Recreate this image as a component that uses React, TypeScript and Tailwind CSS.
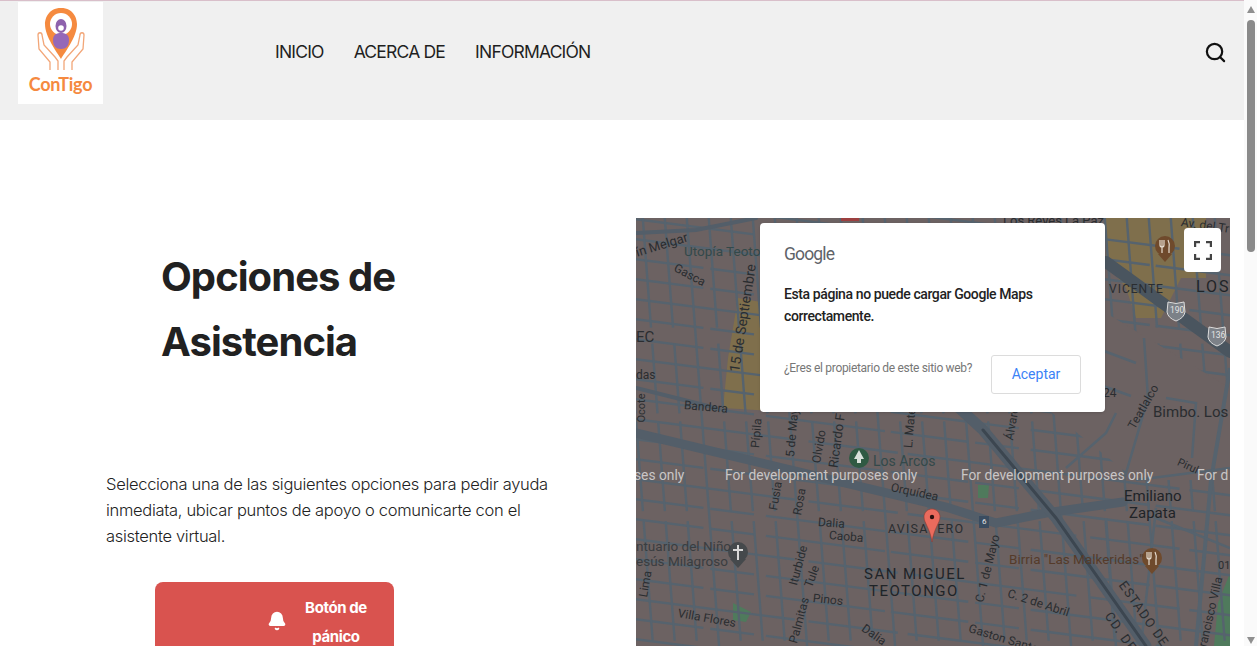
import React from 'react';
import { Search, Bell } from 'lucide-react';

type MapLabel = { t: string; x: number; y: number; r?: number; s?: number; c?: string; ls?: number };

// x, y is where the text starts, measured from the map's top-left corner
const labels: MapLabel[] = [
  { t: 'ín Melgar', x: 0, y: 34, r: -17, s: 13 },
  { t: 'Utopía Teotongo', x: 48, y: 34, s: 13.5, c: '#33494a' },
  { t: 'Gasca', x: 39, y: 49, r: 28, s: 12 },
  { t: '15 de Septiembre', x: 98, y: 154, r: -81, s: 14 },
  { t: 'EC', x: 0, y: 119, s: 15 },
  { t: 'das', x: 0, y: 157, s: 12 },
  { t: 'Ocote', x: 5, y: 204, r: -90, s: 11 },
  { t: 'Bandera', x: 48, y: 187, r: 5, s: 12 },
  { t: 'Pípila', x: 119, y: 230, r: -85, s: 12 },
  { t: '5 de Mayo', x: 154, y: 239, r: -85, s: 12 },
  { t: 'Olvido', x: 180, y: 245, r: -80, s: 12 },
  { t: 'Ricardo F', x: 197, y: 249, r: -82, s: 13 },
  { t: 'L. Mate', x: 272, y: 230, r: -85, s: 12 },
  { t: 'Los Reyes La Paz', x: 367, y: 2, s: 13 },
  { t: 'Av. del Tr', x: 545, y: 4, r: 8, s: 12 },
  { t: 'VICENTE', x: 473, y: 71, s: 12, ls: 1 },
  { t: 'LOS', x: 560, y: 69, s: 16, ls: 2, c: '#1f2428' },
  { t: 'Bimbo. Los R', x: 517, y: 194, s: 15 },
  { t: 'Teatlalco', x: 495, y: 210, r: -60, s: 12 },
  { t: 'Álvaro', x: 373, y: 222, r: -80, s: 12 },
  { t: '24', x: 467, y: 175, s: 12 },
  { t: 'Los Arcos', x: 237, y: 243, s: 14, c: '#33494a' },
  { t: 'Orquídea', x: 255, y: 269, r: 12, s: 12 },
  { t: 'Fusia', x: 137, y: 292, r: -80, s: 12 },
  { t: 'Rosa', x: 161, y: 297, r: -80, s: 12 },
  { t: 'Dalia', x: 182, y: 304, r: 4, s: 12 },
  { t: 'Caoba', x: 193, y: 317, r: 5, s: 12 },
  { t: 'AVISAVERO', x: 252, y: 311, s: 12.5, ls: 1.2 },
  { t: 'SAN MIGUEL', x: 228, y: 356, s: 15, ls: 1.5, c: '#1f2428' },
  { t: 'TEOTONGO', x: 233, y: 373, s: 15, ls: 1.5, c: '#1f2428' },
  { t: 'ntuario del Niño', x: 0, y: 329, s: 13.5, c: '#3a3d40' },
  { t: 'esús Milagroso', x: 0, y: 344, s: 13.5, c: '#3a3d40' },
  { t: 'Lima', x: 7, y: 379, r: -80, s: 12 },
  { t: 'Iturbide', x: 157, y: 367, r: -75, s: 12 },
  { t: 'Tule', x: 172, y: 369, r: -70, s: 12 },
  { t: 'Pinos', x: 177, y: 380, r: 6, s: 12 },
  { t: 'Villa Flores', x: 42, y: 395, r: 10, s: 12 },
  { t: 'Palmitas', x: 157, y: 425, r: -75, s: 12 },
  { t: 'Dalia', x: 227, y: 409, r: 35, s: 12 },
  { t: 'C. 1 de Mayo', x: 343, y: 384, r: -76, s: 12 },
  { t: 'C. 2 de Abril', x: 372, y: 375, r: 18, s: 12 },
  { t: 'Gaston Santos', x: 333, y: 410, r: 17, s: 12 },
  { t: 'Birria "Las Malkeridas"', x: 373, y: 342, s: 13.5, c: '#553b2a' },
  { t: 'Emiliano', x: 488, y: 278, s: 15, c: '#1f2428' },
  { t: 'Zapata', x: 493, y: 295, s: 15, c: '#1f2428' },
  { t: 'Pirul', x: 542, y: 243, r: 25, s: 11 },
  { t: 'ESTADO DE', x: 486, y: 364, r: 55, s: 13, ls: 1 },
  { t: 'CD. DE', x: 472, y: 395, r: 55, s: 13, ls: 1 },
  { t: 'Francisco Villa', x: 565, y: 435, r: -77, s: 12 },
  { t: '01', x: 582, y: 347, s: 11 },
  { t: '190', x: 534, y: 92, s: 8.5, c: '#e4e4e4' },
  { t: '136', x: 575, y: 117, s: 8.5, c: '#e4e4e4' },
  { t: '6', x: 346, y: 304, s: 8, c: '#e4e4e4' },
];

const watermarks = [
  { t: 'ses only', x: -2 },
  { t: 'For development purposes only', x: 89 },
  { t: 'For development purposes only', x: 325 },
  { t: 'For d', x: 561 },
];

// thin neighbourhood streets, worked out from a slightly tilted grid
const across = Array.from({ length: 30 }, (_, i) => -40 + i * 20);
const down = Array.from({ length: 32 }, (_, i) => -60 + i * 22);

function MapStreets() {
  return (
    <svg className="absolute inset-0" width="594" height="428" viewBox="0 0 594 428">
      <rect width="594" height="428" fill="#6c6262" />
      {/* colonias */}
      <polygon points="102,80 125,84 128,140 134,193 87,190 92,140" fill="#7f6f4c" />
      <polygon points="470,0 570,0 570,60 545,60 525,100 500,100 490,70 470,45" fill="#7f6f4c" />
      <polygon points="97,385 115,394 110,404 97,402" fill="#4f7a5c" />
      <polygon points="342,267 353,267 352,280 342,280" fill="#4f7a5c" />
      <polygon points="594,355 594,428 578,428 582,385" fill="#4f7a5c" />
      <g stroke="#56636e" strokeWidth="2.4" fill="none">
        {across.map((y, i) => (
          <line key={i} x1="-10" y1={y} x2="600" y2={y + 78} strokeDasharray={i % 3 === 0 ? '170 14 90 10' : '78 7 44 12 120 6'} />
        ))}
        {down.map((x, i) => (
          <line key={i} x1={x} y1="-10" x2={x + 34} y2="440" strokeDasharray={i % 4 === 1 ? undefined : '120 16 70 8 90 10'} />
        ))}
      </g>
      {/* the emptier part north east of the freeway */}
      <polygon points="470,95 594,170 594,262 500,262 410,190" fill="#6c6262" />
      <g stroke="#56636e" strokeWidth="2.5" fill="none">
        <path d="M508 120 L512 180 L488 262" />
        <path d="M460 130 L500 145 M445 160 L495 178 M530 180 L560 185 L556 240 M430 250 L470 215 L480 195" />
        <path d="M594 150 L575 262 L560 428" strokeWidth="4" />
        <path d="M500 262 L594 250 M520 300 L594 330 M470 300 L480 428 M520 290 L505 428" />
      </g>
      {/* main roads */}
      <g stroke="#535e69" fill="none" strokeLinecap="round">
        <path d="M0 215 L310 289 L360 305 L410 295 L487 284" strokeWidth="9" />
        <path d="M280 150 L347 212 L420 300 L510 428" strokeWidth="11" />
        <path d="M470 44 L594 134" strokeWidth="12" stroke="#4a555f" />
        <path d="M347 212 L420 300 L510 428" strokeWidth="3" stroke="#3c4650" />
        <path d="M120 0 L60 12 L0 15" strokeWidth="4" />
        <path d="M0 170 L80 190" strokeWidth="4" />
      </g>
      {/* shields */}
      <rect x="343" y="298" width="10" height="12" fill="#3a4c60" />
      <path d="M532 84 q8 3 16 0 l1 10 q-1 6 -9 9 q-8 -3 -9 -9 z" fill="#7c8188" stroke="#ddd" />
      <path d="M573 109 q8 3 16 0 l1 10 q-1 6 -9 9 q-8 -3 -9 -9 z" fill="#7c8188" stroke="#ddd" />
      {/* church */}
      <circle cx="102" cy="334" r="10" fill="#45494c" />
      <path d="M94 341 L102 350 L110 341 Z" fill="#45494c" />
      <path d="M102 327 V342 M97 332 H107" stroke="#d8d8d8" strokeWidth="2" />
      {/* park pin */}
      <circle cx="223" cy="240" r="10" fill="#2f5a43" />
      <path d="M223 232 l5 9 h-3 v4 h-4 v-4 h-3 z" fill="#d8e0da" />
      {/* restaurants */}
      <circle cx="529" cy="28" r="10" fill="#6f4a2c" />
      <path d="M522 36 L529 44 L536 36 Z" fill="#6f4a2c" />
      <path d="M524 22 V27 Q524 29 526 29 Q528 29 528 27 V22 M526 22 V35 M532 22 Q534 26 533 30 V35" stroke="#e6dccf" strokeWidth="1.2" fill="none" />
      <circle cx="516" cy="340" r="10" fill="#6f4a2c" />
      <path d="M509 348 L516 356 L523 348 Z" fill="#6f4a2c" />
      <path d="M511 334 V339 Q511 341 513 341 Q515 341 515 339 V334 M513 334 V347 M519 334 Q521 338 520 342 V347" stroke="#e6dccf" strokeWidth="1.2" fill="none" />
      <rect x="205" y="0" width="18" height="3" fill="#9c4040" />
    </svg>
  );
}

function MapPanel() {
  return (
    <div className="relative h-[428px] w-[594px] overflow-hidden font-['Roboto',sans-serif]">
      <MapStreets />
      {labels.map((l, i) => (
        <span
          key={i}
          className="absolute origin-left whitespace-nowrap leading-none"
          style={{
            left: l.x,
            top: l.y - (l.s ?? 12) / 2,
            fontSize: l.s ?? 12,
            color: l.c ?? '#2a2d30',
            letterSpacing: l.ls ?? 0,
            transform: l.r ? `rotate(${l.r}deg)` : undefined,
          }}
        >
          {l.t}
        </span>
      ))}
      {watermarks.map((w) => (
        <span
          key={w.x}
          className="absolute top-[251px] whitespace-nowrap text-[13.8px] leading-none text-[#c9c6c6]"
          style={{ left: w.x }}
        >
          {w.t}
        </span>
      ))}

      <svg className="absolute left-[287px] top-[290px]" width="18" height="36" viewBox="0 0 18 36">
        <path d="M9 1 C4 1 1 5 1 9 C1 15 7 20 9 34 C11 20 17 15 17 9 C17 5 14 1 9 1 Z" fill="#ea6b5d" stroke="#8f3b32" strokeWidth="0.6" />
        <circle cx="9" cy="9" r="2.2" fill="#2a1210" />
      </svg>

      <button className="absolute right-[9px] top-[10px] flex h-[44px] w-[37px] items-center justify-center rounded-sm bg-white">
        <svg width="18" height="19" viewBox="0 0 18 19" fill="none" stroke="#444" strokeWidth="2.4">
          <path d="M1 6 V1 H6 M12 1 H17 V6 M17 13 V18 H12 M6 18 H1 V13" />
        </svg>
      </button>

      {/* error dialog */}
      <div className="absolute left-[124px] top-[5px] flex h-[189px] w-[345px] flex-col rounded bg-white px-6 pt-[21px] shadow-sm">
        <div className="text-[17.5px] leading-[20px] tracking-[-0.85px] text-[#5f6368]">Google</div>
        <p className="mt-[19px] text-[14px] font-medium leading-[22px] tracking-[-0.4px] text-[#222]">
          Esta página no puede cargar Google Maps correctamente.
        </p>
        <div className="mt-[28px] flex items-start justify-between">
          <span className="mt-[5px] text-[12px] leading-[16px] tracking-[-0.32px] text-[#777]">¿Eres el propietario de este sitio web?</span>
          <button className="h-[39px] w-[90px] rounded-[3px] border border-[#dcdcdc] text-[14px] text-[#3b82f6]">
            Aceptar
          </button>
        </div>
      </div>
    </div>
  );
}

function Logo() {
  return (
    <div className="flex h-[102px] w-[85px] flex-col items-center bg-white">
      <svg width="60" height="68" viewBox="0 0 60 68" className="mt-[5px]">
        <path d="M30 1 C17 1 14 12 14 17 C14 30 26 45 30 52 C34 45 46 30 46 17 C46 12 43 1 30 1 Z" fill="#f58a3f" />
        <circle cx="30" cy="17" r="11" fill="#fff" />
        <ellipse cx="30" cy="19" rx="5.5" ry="7" fill="#8e62ad" />
        <circle cx="30" cy="21" r="2.8" fill="#fff" />
        <path d="M22 33 C22 27 26 26 30 26 C34 26 38 27 38 33 C38 39 35 42 30 42 C25 42 22 39 22 33 Z" fill="#9568b8" />
        <g fill="none" stroke="#f2a678" strokeWidth="1.3">
          <path d="M19 63 V55 L8 42 L7 28 C7 25 11 25 11 28 L13 38 L24 50 L27 54 V63" />
          <path d="M41 63 V55 L52 42 L53 28 C53 25 49 25 49 28 L47 38 L36 50 L33 54 V63" />
        </g>
      </svg>
      <span className="-mt-[1px] text-[18px] font-bold leading-[20px] tracking-[-0.2px] text-[#f58a3f] font-['Lato',sans-serif]">ConTigo</span>
    </div>
  );
}

export default function App() {
  return (
    <div className="relative h-[646px] overflow-hidden bg-white font-['Inter',sans-serif] text-[#222]">
      <div className="mr-[13px]">
        <header className="flex h-[120px] items-start border-t border-[#d9bfca] bg-[#f0f0f0] pt-px">
          <div className="ml-[18px]">
            <Logo />
          </div>
          <nav className="ml-[172px] mt-[37px] flex gap-[30px] text-[17.5px] leading-[26px] tracking-[-0.8px] text-[#1f1f1f]">
            <a href="#">INICIO</a>
            <a href="#">ACERCA DE</a>
            <a href="#">INFORMACIÓN</a>
          </nav>
          <Search size={23} strokeWidth={2.3} className="ml-auto mr-[17px] mt-[39px] text-[#111]" />
        </header>

        <main className="flex">
          <section className="w-[636px] shrink-0">
            <h1 className="ml-[161px] mt-[124px] w-[300px] text-[40px] font-bold leading-[65px] tracking-[-0.95px] text-[#212121]">
              Opciones de Asistencia
            </h1>
            <p className="ml-[106px] mt-[97px] w-[470px] text-[16.5px] font-light leading-[26px] tracking-[-0.3px] text-[#222]">
              Selecciona una de las siguientes opciones para pedir ayuda inmediata, ubicar puntos de apoyo o comunicarte con el asistente virtual.
            </p>
            <button className="ml-[155px] mt-[33px] flex h-[90px] w-[239px] items-start justify-end gap-[11px] rounded-lg bg-[#d9534f] pr-[20px] pt-[11px] text-white">
              <Bell size={20} fill="currentColor" className="mt-[18px]" />
              <span className="w-[76px] text-center text-[15px] font-bold leading-[29px] tracking-[-0.4px]">Botón de pánico</span>
            </button>
          </section>
          <section className="mt-[98px]">
            <MapPanel />
          </section>
        </main>
      </div>

      {/* scrollbar */}
      <div className="absolute bottom-0 right-0 top-0 flex w-[13px] flex-col items-center bg-[#fafafa]">
        <div className="mt-[6px] h-0 w-0 border-x-[4px] border-b-[7px] border-x-transparent border-b-[#8f8f8f]" />
        <div className="mt-[7px] h-[232px] w-[8px] rounded-full bg-[#8a8a8a]" />
        <div className="mb-[2px] mt-auto h-0 w-0 border-x-[4px] border-t-[7px] border-x-transparent border-t-[#8f8f8f]" />
      </div>
    </div>
  );
}
